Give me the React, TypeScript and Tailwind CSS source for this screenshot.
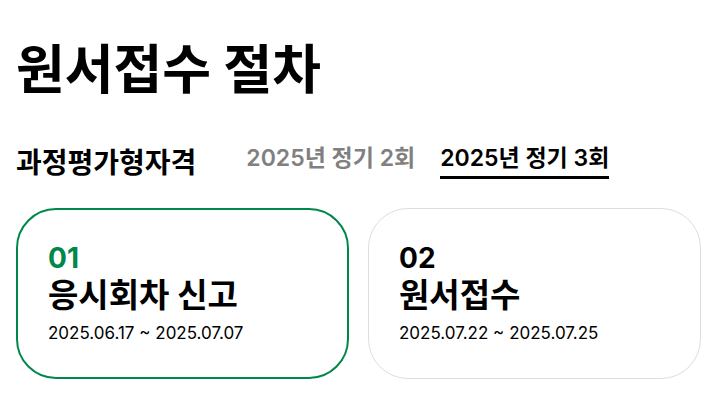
import React from 'react';

// 원서접수 절차 화면
const steps = [
  { no: '01', title: '응시회차 신고', date: '2025.06.17 ~ 2025.07.07', active: true },
  { no: '02', title: '원서접수', date: '2025.07.22 ~ 2025.07.25', active: false },
];

const tabs = [
  { label: '2025년 정기 2회', active: false },
  { label: '2025년 정기 3회', active: true },
];

export default function App() {
  return (
    <div
      className="w-[711px] h-[416px] bg-white text-black px-4 pt-[34px]"
      style={{ fontFamily: 'Inter, "Noto Sans CJK KR", sans-serif' }}
    >
      <h1 className="text-[53px] font-bold leading-[72px]">원서접수 절차</h1>

      <div className="flex items-center mt-[37px] h-[40px]">
        <h2 className="text-[28px] font-bold leading-none">과정평가형자격</h2>
        <div className="flex items-center gap-[25px] ml-[50px]">
          {tabs.map((tab) => (
            <button
              key={tab.label}
              className={`text-[23px] font-semibold leading-none pb-[6px] border-b-[3px] ${
                tab.active ? 'text-black border-black' : 'text-[#808080] border-transparent'
              }`}
            >
              {tab.label}
            </button>
          ))}
        </div>
      </div>

      <div className="grid grid-cols-[333px_333px] gap-[19px] mt-[25px]">
        {steps.map((step) => (
          <div
            key={step.no}
            className={`h-[171px] rounded-[40px] flex flex-col pl-[30px] ${
              step.active ? 'border-2 border-[#00874a] pt-[31px]' : 'border border-[#dddddd] pt-[32px]'
            }`}
          >
            <div
              className={`text-[28px] font-bold leading-[34px] ${
                step.active ? 'text-[#00874a]' : 'text-black'
              }`}
            >
              {step.no}
            </div>
            <div className="text-[33px] font-bold leading-[40px]">{step.title}</div>
            <div className="text-[17px] leading-[24px] mt-[6px]">{step.date}</div>
          </div>
        ))}
      </div>
    </div>
  );
}
